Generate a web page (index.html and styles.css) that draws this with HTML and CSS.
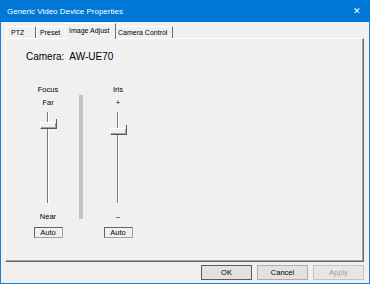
FILE: index.html
```html
<!DOCTYPE html>
<html lang="en">
<head>
  <meta charset="UTF-8" />
  <title>Generic Video Device Properties</title>
  <link rel="stylesheet" href="styles.css">
</head>
<body>
  <div class="window">
    <div class="titlebar">
      <span class="title">Generic Video Device Properties</span>
      <span class="close">&#x2715;</span>
    </div>

    <div class="main">
      <div class="tabs">
        <div class="tab ptz">PTZ</div>
        <div class="tab preset">Preset</div>
        <div class="tab active">Image Adjust</div>
        <div class="tab control">Camera Control</div>
      </div>

      <div class="panel">
        <div class="camera">Camera:&nbsp; AW-UE70</div>

        <div class="controls">
          <div class="column">
            <div class="label">Focus</div>
            <div class="label top">Far</div>
            <div class="slider">
              <div class="track"></div>
              <div class="thumb" style="top: 10px"></div>
            </div>
            <div class="label bottom">Near</div>
            <div class="auto">Auto</div>
          </div>

          <div class="divider"></div>

          <div class="column">
            <div class="label">Iris</div>
            <div class="label top">+</div>
            <div class="slider">
              <div class="track"></div>
              <div class="thumb" style="top: 16px"></div>
            </div>
            <div class="label bottom">&ndash;</div>
            <div class="auto">Auto</div>
          </div>
        </div>
      </div>

      <div class="buttons">
        <button class="btn default">OK</button>
        <button class="btn">Cancel</button>
        <button class="btn" disabled>Apply</button>
      </div>
    </div>
  </div>
</body>
</html>
```

FILE: styles.css
```css
* {
  box-sizing: border-box;
}

body {
  margin: 0;
  font-family: 'Liberation Sans', Arial, sans-serif;
  color: #000;
  background: #f0f0f0;
}

.window {
  width: 370px;
  height: 284px;
  border: 1px solid #1a7fd4;
  border-top: none;
  background: #f0f0f0;
  display: flex;
  flex-direction: column;
}

.titlebar {
  height: 22px;
  margin: 0 -1px;
  background: #0078d7;
  color: #fff;
  display: flex;
  align-items: center;
  justify-content: space-between;
  padding: 0 9px 0 7px;
  font-size: 8px;
}

.close {
  font-size: 9px;
}

.main {
  flex: 1;
  padding: 1px 5px 0 4px;
  display: flex;
  flex-direction: column;
}

/* tab strip */
.tabs {
  height: 15px;
  display: flex;
  align-items: flex-end;
  padding-left: 1px;
  font-size: 7px;
  white-space: nowrap;
}

.tab {
  height: 12px;
  line-height: 11px;
  padding: 0 3px;
  border-left: 1px solid #fff;
  border-right: 1px solid #6e6e6e;
  border-top: 1px solid #fff;
}

.tab.ptz {
  width: 30px;
  padding-left: 4px;
}

.tab.preset {
  width: 30px;
}

.tab.active {
  height: 16px;
  width: 51px;
  line-height: 13px;
  margin: 0 -1px -1px -1px;
  padding: 0 3px;
  background: #f0f0f0;
  position: relative;
  z-index: 1;
}

.tab.control {
  width: 58px;
  padding: 0 2px;
}

/* page */
.panel {
  height: 224px;
  border-top: 1px solid #fff;
  border-left: 1px solid #fff;
  border-right: 1px solid #696969;
  border-bottom: 1px solid #696969;
  box-shadow: inset -1px -1px 0 #a0a0a0;
}

.camera {
  padding: 12px 0 0 20px;
  font-size: 10px;
  line-height: 12px;
}

.controls {
  display: flex;
  margin-top: 22px;
  padding-left: 27px;
}

.column {
  width: 30px;
  display: flex;
  flex-direction: column;
  align-items: center;
}

.label {
  font-size: 7.5px;
  line-height: 10px;
  height: 10px;
}

.label.top {
  margin-top: 3px;
}

.label.bottom {
  margin-top: 9px;
}

.divider {
  width: 4px;
  height: 124px;
  margin: 10px 20px 0 16px;
  background: #c4c4c4;
}

.slider {
  position: relative;
  width: 30px;
  height: 91px;
  margin-top: 4px;
}

.track {
  width: 2px;
  height: 91px;
  margin: 0 auto;
  border-left: 1px solid #7a7a7a;
  border-right: 1px solid #fff;
}

.thumb {
  position: absolute;
  left: 7px;
  width: 17px;
  height: 7px;
  background: #f0f0f0;
  border-top: 1px solid #fff;
  border-left: 1px solid #fff;
  border-right: 1px solid #5a5a5a;
  border-bottom: 1px solid #5a5a5a;
  box-shadow: inset -1px -1px 0 #a0a0a0;
}

.thumb::after {
  content: "";
  position: absolute;
  right: -1px;
  top: -4px;
  width: 1px;
  height: 4px;
  background: #5a5a5a;
}

.auto {
  width: 29px;
  height: 11px;
  margin-top: 5px;
  font-size: 7.5px;
  line-height: 9px;
  text-align: center;
  border-top: 1px solid #646464;
  border-left: 1px solid #646464;
  border-right: 1px solid #a0a0a0;
  border-bottom: 1px solid #a0a0a0;
}

/* dialog buttons */
.buttons {
  display: flex;
  justify-content: flex-end;
  gap: 5px;
  margin-top: 3px;
}

.btn {
  width: 51px;
  height: 15px;
  padding: 0;
  font-family: inherit;
  font-size: 7.5px;
  color: #000;
  background: #e1e1e1;
  border: 1px solid #adadad;
}

.btn.default {
  border-color: #5a5a5a;
}

.btn:disabled {
  color: #a0a0a0;
  background: #e6e6e6;
  border-color: #c4c4c4;
}
```
